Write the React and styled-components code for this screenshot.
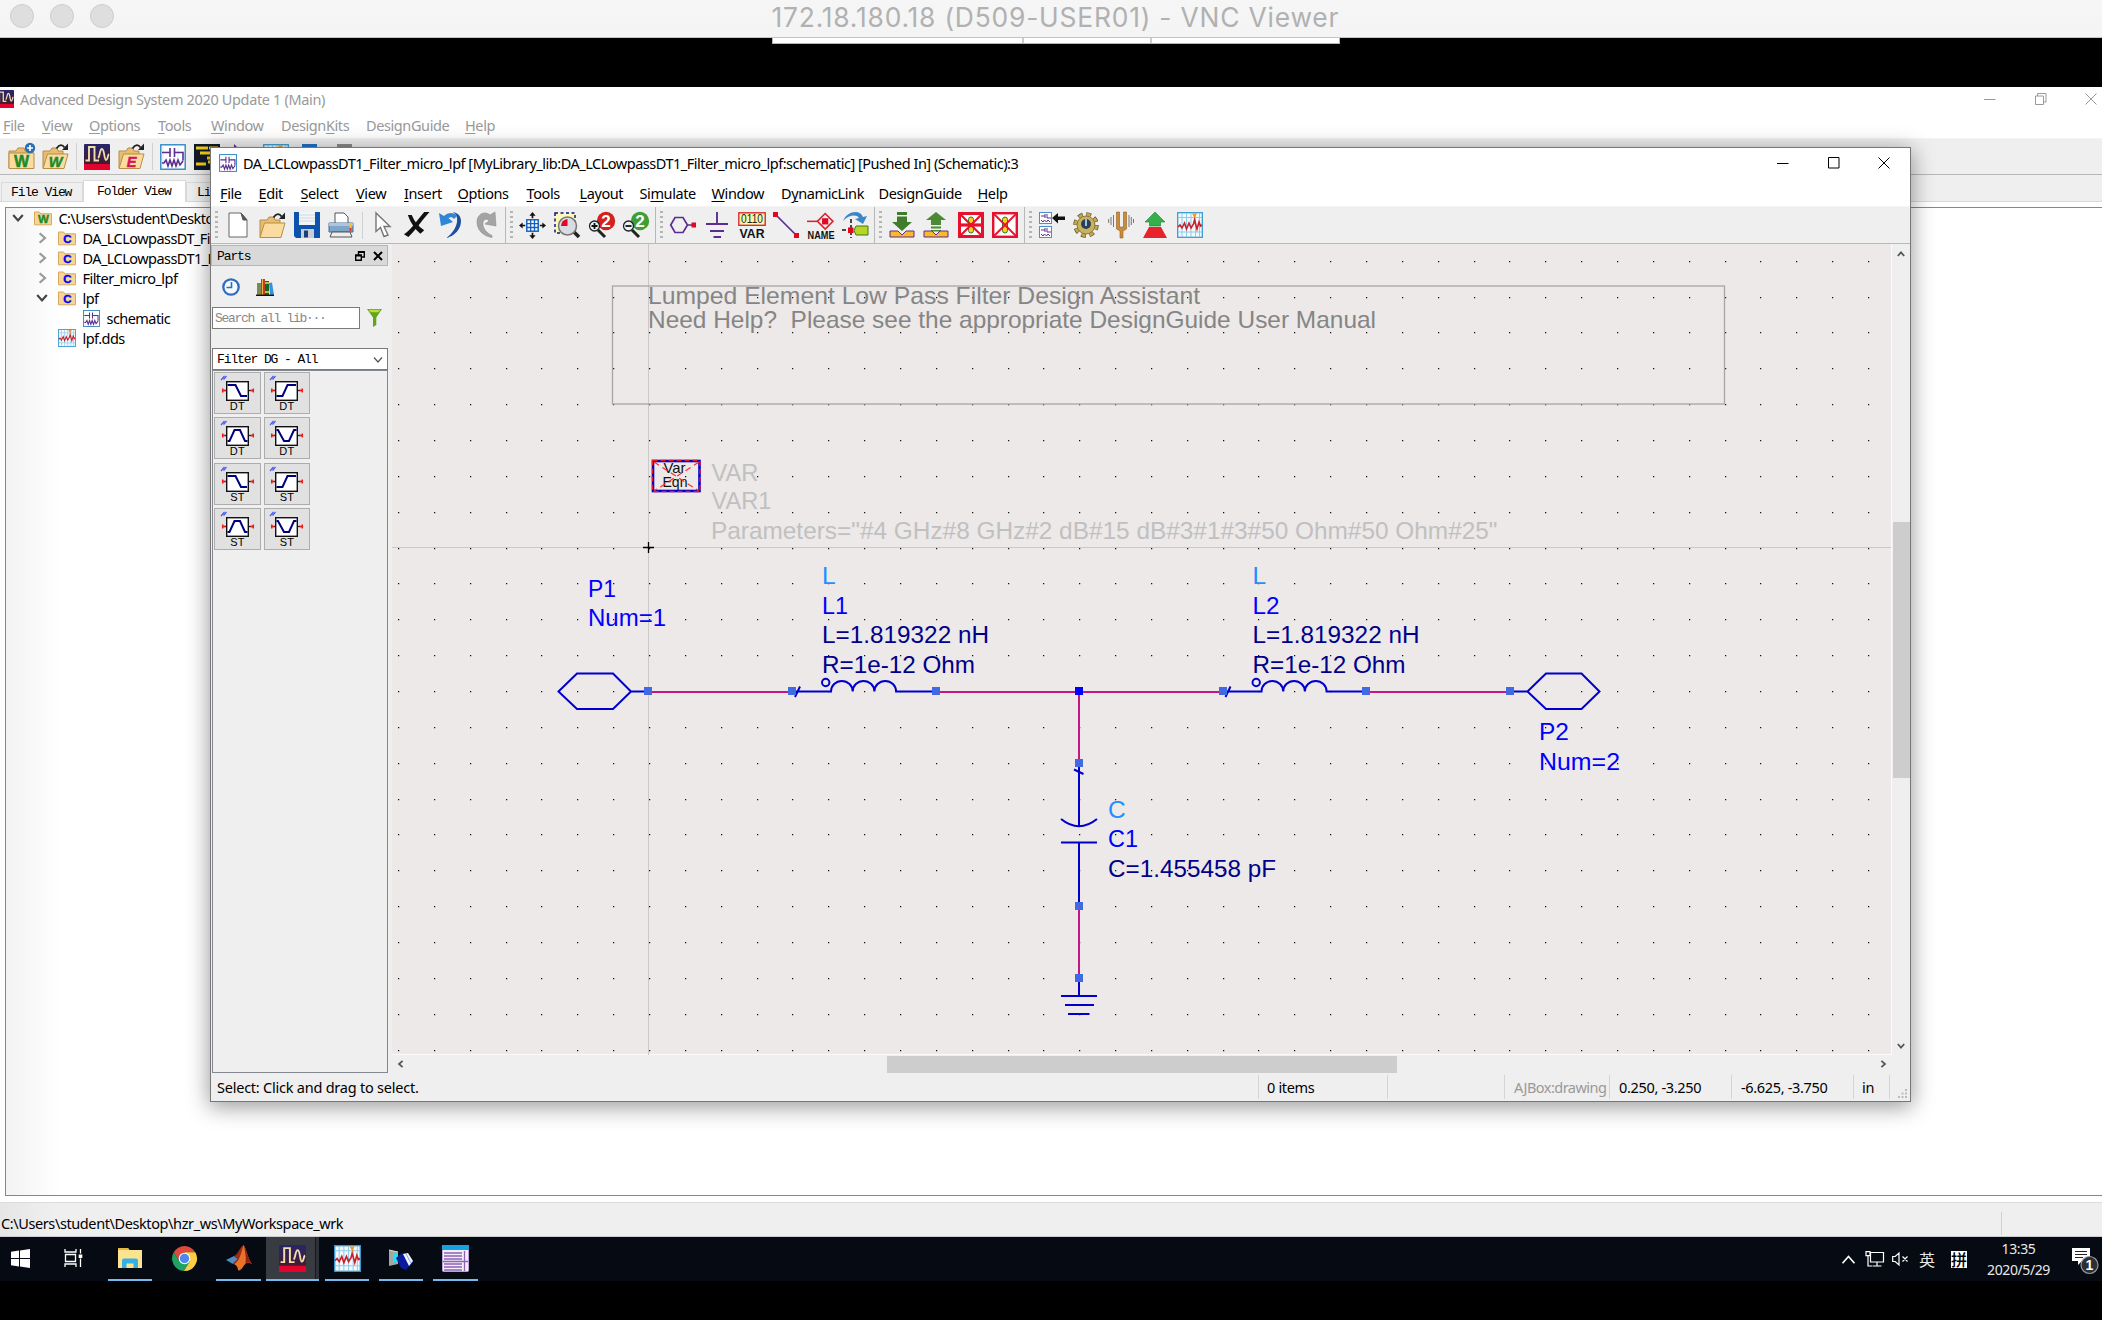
import React from 'react';
import styled, { createGlobalStyle, css } from 'styled-components';

const UI = '"Noto Sans", "Open Sans", "Noto Sans CJK SC", sans-serif';
const MONO = '"Liberation Mono", "DejaVu Sans Mono", "Noto Sans CJK SC", monospace';
const DRAW = '"Liberation Sans", Arial, sans-serif';

const Global = createGlobalStyle`
  * { box-sizing: border-box; }
  body { margin: 0; background: #000; }
  svg { display: block; flex: none; overflow: visible; }
`;

/* ---------- shell ---------- */
const Screen = styled.div`
  width: 2102px; height: 1320px; overflow: hidden;
  display: flex; flex-direction: column;
  background: #000; font-family: ${UI}; font-size: 14.5px; color: #000;
`;
const VncBar = styled.header`
  height: 38px; flex: none; padding: 0 10px;
  display: grid; grid-template-columns: 761.5px 1fr;
  background: linear-gradient(#f6f6f6, #f4f4f4); border-bottom: 1px solid #c4c4c4;
`;
const Lights = styled.div`display: flex; gap: 16px; padding-top: 4px;`;
const Light = styled.span`
  width: 24px; height: 24px; border-radius: 50%;
  background: #dedede; border: 1px solid #cdcdcd;
`;
const VncTitle = styled.h1`
  margin: 0; font: 400 26.4px/35px Inter, sans-serif; color: #b1b1b1; white-space: nowrap; letter-spacing: 0.8px;
`;
const VncGap = styled.div`height: 49px; flex: none; padding-left: 772px;`;
const VncTab = styled.div`
  width: 568px; height: 6px; background: #fff; border: solid #b5b5b5; border-width: 0 1px 1px;
  display: grid; grid-template-columns: 251px 128px 1fr;
  span { border-right: 2px solid #ccc; }
  span:last-child { border: 0; }
`;
const Desktop = styled.main`position: relative; flex: none; height: 1194px; display: flex; flex-direction: column;`;

/* ---------- windows ---------- */
const MainWindow = styled.section`
  height: 1150px; flex: none; display: flex; flex-direction: column; background: #fff;
`;
const FloatWindow = styled.section`
  position: absolute; left: 210px; top: 60px; width: 1701px; height: 955px;
  display: flex; flex-direction: column; background: #efefef;
  border: 1px solid #777; box-shadow: 0 4px 21px 1px rgba(0, 0, 0, .4);
`;
const TitleBar = styled.div`
  height: ${p => p.$h}px; flex: none; display: flex; align-items: center; overflow: hidden;
  padding: 0 0 2px; background: #fff; color: ${p => (p.$dim ? '#999' : '#000')};
  letter-spacing: ${p => p.$ls}px; white-space: nowrap;
  > svg:first-child { margin-left: ${p => p.$pl}px; }
`;
const TitleText = styled.span`flex: 1; padding-left: 6px; line-height: 20px;`;
const Controls = styled.div`
  display: flex; gap: 38.5px; padding-right: ${p => p.$pr}px; color: ${p => (p.$dim ? '#999' : '#000')};
`;
const Menu = styled.nav`
  height: ${p => p.$h}px; flex: none; display: flex; align-items: center;
  padding: 0 0 ${p => p.$pb || 0}px ${p => p.$pl}px; background: #fff; color: ${p => (p.$dim ? '#999' : '#000')};
`;
const MenuItem = styled.span`
  width: ${p => p.$w}px; line-height: 20px; white-space: nowrap; letter-spacing: -.4px;
  u { text-decoration-thickness: 1px; text-underline-offset: 2px; }
`;
const Toolbar = styled.div`
  height: ${p => p.$h}px; flex: none; display: flex; padding-left: ${p => p.$pl || 0}px;
  background: #efefef; border-top: 1px solid #f3f3f3; border-bottom: 1px solid #b8b8b8;
`;
const Group = styled.div`
  display: flex; align-items: center; padding-right: 1.6px;
  border-right: 1px solid ${p => (p.$last ? 'transparent' : '#b8b8b8')};
`;
const Grip = styled.span`
  width: 3px; height: 28px; margin: 0 2.9px 0 4.1px;
  background: repeating-linear-gradient(#b4b4b4 0 2px, transparent 2px 5px);
`;
const Cell = styled.span`width: 34.4px; display: flex; justify-content: center;`;
const Sep = styled.span`width: 1px; height: 27px; margin: 0 3px; background: #d0d0d0;`;

/* ---------- main window body ---------- */
const Tabs = styled.div`
  height: 27px; flex: none; display: flex; align-items: flex-end; padding-left: 1px;
  background: #efefef; border-bottom: 1px solid #d9d9d9;
`;
const Tab = styled.span`
  width: ${p => p.$w}px; height: ${p => (p.$on ? 22 : 19)}px; margin-bottom: ${p => (p.$on ? -1 : 0)}px;
  border: 1px solid #d9d9d9; border-bottom: 0; background: ${p => (p.$on ? '#fff' : '#efefef')};
  font: 13px/${p => (p.$on ? 22 : 20)}px ${MONO}; letter-spacing: -1.1px; padding-left: ${p => p.$pl}px; white-space: nowrap;
`;
const TreePane = styled.div`
  flex: 1; margin: 5px 0 6px 5px; border: 1px solid #828790; border-right: 0;
  background: linear-gradient(90deg, #f3f3f3, #fff 56px);
`;
const Row = styled.div`
  height: 20px; display: flex; align-items: center; padding-left: ${p => p.$pl}px; letter-spacing: -.55px; white-space: nowrap;
`;
const Twist = styled.span`width: ${p => p.$w}px; display: flex;`;
const RowText = styled.span`padding-left: 6.5px; line-height: 20px;`;
const MainStatus = styled.footer`
  height: 35px; flex: none; display: flex; align-items: center; padding-top: 7px;
  background: linear-gradient(90deg, #e6e6e6, #efefef 56px); border-top: 1px solid #dcdcdc; border-bottom: 1px solid #ccc;
  span { width: 2001px; padding-left: 1px; line-height: 22px; letter-spacing: -.4px; }
  i { width: 1px; height: 23px; background: #d0d0d0; }
`;

/* ---------- schematic window body ---------- */
const Work = styled.div`flex: 1; min-height: 0; display: flex;`;
const Parts = styled.aside`width: 181px; flex: none; display: flex; flex-direction: column; padding: 1px 4px 0 0;`;
const PartsHead = styled.div`
  height: 21px; display: flex; align-items: center; gap: 8px; padding: 1px 4px 0 5px; margin-bottom: 12px;
  background: #d9d9d9; border: 1px solid #b5b5b5; font: 13px/16px ${MONO}; letter-spacing: -1.1px;
  b { flex: 1; font-weight: 400; padding-top: 1px; }
`;
const PartsIcons = styled.div`display: flex; gap: 16px; padding-left: 11px; height: 18px; margin-bottom: 11px;`;
const SearchRow = styled.div`display: flex; align-items: center; gap: 7px; padding-left: 1px; margin-bottom: 19px;`;
const Search = styled.div`
  width: 148px; height: 22px; background: #fff; border: 1px solid #7a7a7a; padding-left: 2px;
  font: 13px/22px ${MONO}; letter-spacing: -1.3px; color: #888; white-space: nowrap;
`;
const Combo = styled.div`
  margin-left: 1px; height: 22px; display: flex; align-items: center; justify-content: space-between;
  background: #fff; border: 1px solid #7a7a7a; padding: 1px 4px 0; font: 13px/20px ${MONO}; letter-spacing: -1.1px;
`;
const PartList = styled.div`
  flex: none; height: 703px; margin-left: 1px; border: 1px solid #828790; padding: 1px;
  display: grid; grid-template-columns: 47px 46px; grid-auto-rows: 42px; gap: 3.3px 3px; align-content: start;
`;
const PartButton = styled.span`
  background: #e1e1e1; border: 1px solid #adadad; display: flex; flex-direction: column; align-items: center;
  font: 11px/11px ${DRAW}; letter-spacing: .3px; padding-top: 2px;
`;
const Sheet = styled.div`width: 1500px; display: flex; flex-direction: column;`;
const Canvas = styled.svg`background: #ece9e8; box-shadow: inset -1px -1px #fafafa; font-family: ${DRAW};`;
const HScroll = styled.div`
  height: 18px; display: flex; align-items: center; justify-content: space-between; padding: 0 5px;
`;
const VScroll = styled.div`
  width: 18px; height: 811px; display: flex; flex-direction: column; align-items: center;
  justify-content: space-between; padding: 6px 0 5px;
`;
const Thumb = styled.span`
  background: #cdcdcd;
  ${p => p.$v ? css`width: 17px; height: 256px;` : css`height: 17px; width: 510px;`}
`;
const Status = styled.footer`
  height: 28px; flex: none; display: flex; align-items: center; white-space: nowrap; padding-bottom: 1px;
`;
const StatusCell = styled.span`
  width: ${p => p.$w}px; height: 24px; line-height: 25px; padding-left: ${p => p.$pl}px;
  border-right: 1px solid #d4d4d4; color: ${p => (p.$dim ? '#999' : '#000')}; letter-spacing: ${p => p.$ls || -.33}px;
`;
const Corner = styled.span`flex: 1; align-self: flex-end; display: flex; justify-content: flex-end; padding: 0 2px 1px 0;`;

/* ---------- taskbar ---------- */
const Taskbar = styled.footer`
  height: 44px; flex: none; display: flex; background: #060b13; color: #e8e8e8;
`;
const Task = styled.span`
  width: ${p => p.$w}px; margin-left: ${p => p.$ml || 0}px; display: flex; align-items: center; justify-content: center;
  border-bottom: 2px solid ${p => (p.$run ? '#76b9ed' : 'transparent')};
  background: ${p => (p.$on ? 'linear-gradient(90deg, #383b41 49px, #15191f 49px 50px, #2e3238 50px)' : 'none')};
  background-clip: padding-box;
`;
const Tray = styled.div`margin-left: auto; display: flex; align-items: center; font-size: 14px;`;
const Slot = styled.span`width: ${p => p.$w}px; display: flex; align-items: center;`;
const Ime = styled.span`
  font: 16px/17px "Noto Sans CJK SC", sans-serif; width: 16px; height: 17px;
  ${p => p.$inv && css`background: #fff; color: #000; font-weight: 500;`}
`;
const Clock = styled.div`
  width: 85px; text-align: center; font: 14px/21px ${UI}; letter-spacing: -.4px; padding-right: 18px; white-space: nowrap;
`;

/* ---------- glyphs ---------- */
const Svg = ({ s = 26, w, h, vb, children }) => (
  <svg width={w || s} height={h || s} viewBox={vb || '0 0 26 26'} fill="none">{children}</svg>
);
const txt = { fontFamily: 'Liberation Sans, Arial, sans-serif', fontWeight: 700 };

const MinG = () => <Svg w={12} h={12} vb="0 0 12 12"><path d="M0 6.500h11.500" stroke="currentColor" /></Svg>;
const MaxG = () => <Svg w={12} h={12} vb="0 0 12 12"><path d="M.5.5h10.500v10.500H.5z" stroke="currentColor" /></Svg>;
const RestoreG = () => <Svg w={12} h={12} vb="0 0 12 12"><path d="M.5 3h8v8.500h-8zM2.500 3V.5H11V9H8.500" stroke="currentColor" /></Svg>;
const CloseG = () => <Svg w={12} h={12} vb="0 0 12 12"><path d="M.5.5l11 11M11.500.5l-11 11" stroke="currentColor" /></Svg>;
const Chev = ({ d, c = '#555', w = 8, sw = 2.2 }) => (
  <Svg w={w} h={w} vb="0 0 10 10">
    <path stroke={c} strokeWidth={sw} d={{ up: 'M1 7.500l4-4.500 4 4.500', down: 'M1 2.500L5 7l4-4.500', left: 'M7 1L2.500 5 7 9', right: 'M3 1l4.500 4L3 9' }[d]} />
  </Svg>
);

const AdsIcon = ({ s = 26 }) => (
  <Svg s={s}>
    <defs><linearGradient id="ads" x1="0" y1="0" x2="0" y2="1"><stop stopColor="#27266b" /><stop offset="1" stopColor="#4a1a1c" /></linearGradient></defs>
    <rect width="26" height="26" rx="1" fill="url(#ads)" /><path d="M0 20h26v6H0z" fill="#e4032c" />
    <path d="M1.500 16.500H5V3h5.500v13.500h4.500" stroke="#f3dcae" strokeWidth="1.900" />
    <path d="M14 14c2-1 1.500-9 4-9s2 11 4 11 1.500-5 3-6" stroke="#f3dcae" strokeWidth="1.800" />
  </Svg>
);
const SchIcon = ({ s = 26 }) => (
  <Svg s={s}>
    <rect x=".8" y=".8" width="24.400" height="24.400" fill="#fff" stroke="#2f86c6" strokeWidth="1.400" />
    <path d="M3 1v24M1 8h24M1 17h24M18 1v24" stroke="#c5dff0" strokeWidth=".6" />
    <path d="M2 8.500h8M10 4v9M14.500 4v9M14.500 8.500H23v8M2 19h2l2-3 2 6 2-6 2 6 2-6 2 6 2-6 2 5 3-4" stroke="#5c2d91" strokeWidth="1.600" />
  </Svg>
);
const DdsIcon = ({ s = 26 }) => (
  <Svg s={s}>
    <rect x=".7" y=".7" width="24.600" height="24.600" fill="#f3fafd" stroke="#3a9bd0" strokeWidth="1.300" />
    <path d="M5 1v24M9.500 1v24M14 1v24M18.500 1v24M22.500 1v24M1 5.500h24M1 20h24" stroke="#8ecbe8" strokeWidth="1" />
    <path d="M15 1.500h5l-2.500 4.500z" fill="#f39b1f" />
    <path d="M1 15l2-2 2 3 2.500-5 2 6 2.500-6 2 5 2.500-4 1-4 2.500 9 2-7 1.500 4 1.500-1" stroke="#c8202b" strokeWidth="1.600" />
  </Svg>
);
const Folder = ({ t, c, open, plus, it }) => (
  <Svg s={27} vb="0 0 27 27">
    <path d={open ? 'M1 25V8h7l2-3h5l1 3h5v6' : 'M1 25V8h7l2-3h6l1 3h8v17z'} fill="#e7bc73" stroke="#b98d45" />
    <path d={open ? 'M1 25.500L5.500 11H26l-4 14.500z' : 'M1 10h25v15.500H1z'} fill="#fbdca0" stroke="#b98d45" />
    {open && <path d="M14.500 5.500c3-4.500 6-4 8-1" stroke="#222" strokeWidth="1.800" />}
    {open && <path d="M26 .5v6.500h-6z" fill="#222" />}
    {plus && <g><circle cx="22" cy="5" r="5.200" fill="#2a6fb5" /><path d="M22 2v6M19 5h6" stroke="#fff" strokeWidth="1.700" /></g>}
    {t && <text x="13.500" y="23.500" textAnchor="middle" fontSize={it ? 14.500 : 16} fill={c} fontStyle={it ? 'italic' : undefined} stroke={c} strokeWidth=".5" {...txt}>{t}</text>}
  </Svg>
);
const SmallFolder = ({ t, c }) => (
  <Svg w={18} h={15} vb="0 0 18 15">
    <path d="M.5 13.800V1h5l1.200 1.800h10.800v11z" fill="#f7d596" stroke="#d9a95a" />
    <text x="9.200" y="12" textAnchor="middle" fontSize="11.500" fill={c} stroke={c} strokeWidth=".4" {...txt}>{t}</text>
  </Svg>
);
const LayoutIcon = () => (
  <Svg><path d="M0 0h26v26H0z" fill="#111a2c" /><path d="M2 4h12M15 4h9M6 9h13v5h-6M2 20h10M14 18h10" stroke="#f2d117" strokeWidth="3" /></Svg>
);
const icons = {
  newDoc: <Svg><path d="M4 1h12l6 7v17H4z" fill="#fff" stroke="#666" /><path d="M16 1l6 7h-4z" fill="#555" stroke="#555" /></Svg>,
  open: <Folder open />,
  save: (
    <Svg><path d="M0 0h26v26H2l-2-2z" fill="#0d52ad" /><path d="M5 0h16v13H5z" fill="#f2f5f8" /><path d="M5 3h16M5 6h16M5 9h16" stroke="#d2d8de" /><path d="M7 17h13v9H7z" fill="#c9ced6" /><path d="M10 18.500h4v7h-4z" fill="#1d3f78" /></Svg>
  ),
  print: (
    <Svg><path d="M7 12V1h9l4 4v7z" fill="#fff" stroke="#555" /><path d="M1 11h24v9H1z" fill="#7fa5c9" stroke="#496a8b" /><path d="M1 11h24v3H1z" fill="#adc6dd" /><path d="M4 20h18l2 5H2z" fill="#eee" stroke="#555" /><path d="M22.500 12v7" stroke="#f4c22d" strokeWidth="2" /><path d="M22.500 16v3" stroke="#d33" strokeWidth="2" /></Svg>
  ),
  pointer: <Svg><path d="M6 1v18.500l4.500-4 3.500 9 4-1.500-4-8.500h6z" fill="#fff" stroke="#777" strokeWidth="1.400" /></Svg>,
  del: <Svg s={26} vb="0 0 27 27"><path d="M0 23C8 18 14 8 21 0h5.500C20 7 12 19 4.500 26z" fill="#111" /><path d="M4 3h4c3 7 7 12 13 16l-4 3.500C12 18 7 12 4 3z" fill="#111" /></Svg>,
  undo: <Svg><path d="M7 26c9-2 15-9 15-17 0-5-3-8-8-9 4 3 4.500 6 4 10-1 6-5 12-11 16z" fill="#1c4fa0" /><path d="M0 1l2 13 12-4-4.500-4c2-1.500 4-1 5.500 1l3-3c-3-4-9-4-13 0z" fill="#2f86d6" /></Svg>,
  redo: <Svg><path d="M19 25.500C10 24 4 18 4 10c0-5 3-9 8-9 2 0 4 1 5 2l5-3 1 14-11-2 4-3c-2-3-5-2-6 1-1 5 3 11 9 13.500z" fill="#a4a4a4" stroke="#8d8d8d" strokeWidth=".6" /></Svg>,
  move: (
    <Svg s={27}><rect x="7.500" y="7.500" width="11" height="11" fill="#fff" stroke="#1560bd" strokeWidth="1.400" /><path d="M11.200 7v12M14.900 7v12M7 11.200h12M7 14.900h12" stroke="#1560bd" strokeWidth="1.300" /><path d="M13 0l3 3.500h-2.200V6h-1.600V3.500H10zM13 26l3-3.500h-2.200V20h-1.600v2.500H10zM0 13l3.500-3v2.200H6v1.600H3.500V16zM26 13l-3.500-3v2.200H20v1.600h2.500V16z" fill="#111" /></Svg>
  ),
  zoomArea: (
    <Svg><path d="M1 1h20v20H1z" fill="#fdfbb8" stroke="#12127d" strokeWidth="1.500" strokeDasharray="3 2.500" /><path d="M20 20l5 5" stroke="#222" strokeWidth="3.500" /><circle cx="13.500" cy="14" r="9" fill="#d8dbe2" stroke="#777" strokeWidth="1.500" /><path d="M13.500 14H7a7 7 0 016.500-7z" fill="#e40521" /></Svg>
  ),
  zoomIn: (
    <Svg><circle cx="17" cy="9" r="9.200" fill="#d3211d" /><text x="17" y="15" fontSize="17" textAnchor="middle" fill="#fff" {...txt}>2</text><path d="M9 18l7 7" stroke="#222" strokeWidth="3" /><circle cx="5.500" cy="14" r="5" fill="#e9f3f8" stroke="#222" strokeWidth="1.300" /><path d="M5.500 11v6M2.500 14h6" stroke="#111" strokeWidth="1.800" /></Svg>
  ),
  zoomOut: (
    <Svg><circle cx="17" cy="9" r="9.200" fill="#3f9f35" /><text x="17" y="15" fontSize="17" textAnchor="middle" fill="#fff" {...txt}>2</text><path d="M9 18l7 7" stroke="#222" strokeWidth="3" /><circle cx="5.500" cy="14" r="5" fill="#e9f3f8" stroke="#222" strokeWidth="1.300" /><path d="M2.500 14h6" stroke="#111" strokeWidth="1.800" /></Svg>
  ),
  pin: <Svg><path d="M5 5.500h8l4.500 7.500-4.500 7.500H5L.7 13zM17.500 13H22" stroke="#5c2d91" strokeWidth="1.700" /><path d="M21.500 10.500H26v5h-4.500z" fill="#e40521" /></Svg>,
  ground: <Svg><path d="M13 0v12M2 12h22M6 19h14M9.500 25h7.500" stroke="#5c2d91" strokeWidth="1.900" /></Svg>,
  varEq: (
    <Svg s={27}><rect x=".8" y=".8" width="25.400" height="12" fill="#fdf6a9" stroke="#d8232a" strokeWidth="1.300" /><text x="13.500" y="11" fontSize="11.500" textAnchor="middle" fill="#222" fontFamily={DRAW} textLength="21" lengthAdjust="spacingAndGlyphs">0110</text><text x="13.500" y="25.500" fontSize="12" textAnchor="middle" fill="#111" textLength="24" lengthAdjust="spacingAndGlyphs" {...txt}>VAR</text></Svg>
  ),
  wire: <Svg><path d="M3 3l20 20" stroke="#5c2d91" strokeWidth="1.700" /><path d="M0 0h5v5H0zM21 21h5v5h-5z" fill="#e40521" /></Svg>,
  name: (
    <Svg s={27}><path d="M0 9h10" stroke="#d8232a" strokeWidth="1.500" /><path d="M17.500 1.500L25 9l-7.500 7.500L10 9z" stroke="#d8232a" strokeWidth="1.500" /><path d="M14.500 6h6v6h-6z" fill="#e40521" /><text x="13.500" y="26" fontSize="10.500" textAnchor="middle" fill="#111" textLength="26" lengthAdjust="spacingAndGlyphs" {...txt}>NAME</text></Svg>
  ),
  rotate: (
    <Svg><path d="M1 9C5-1 18-3 21 5l4-1-4 8-8-5 4-1C14 2 7 3 1 9z" fill="#3b86c8" /><path d="M9 7v19M0 18h9" stroke="#111" strokeWidth="1.500" strokeDasharray="4 2" /><path d="M6 15.500h5.500v5.500H6z" fill="#e40521" /><path d="M14 14h12v9H14l-2-4.500z" fill="#b9d523" stroke="#3c7a1e" /></Svg>
  ),
  push: (
    <Svg><path d="M8 0h10v3H8zM8 4.500h10V10h5l-10 9-10-9h5z" fill="#3f7d2c" /><path d="M1 19h8l4 4 4-4h8v6H1z" fill="#fbb829" stroke="#5c2d91" /></Svg>
  ),
  pop: (
    <Svg><path d="M13 0l10 8h-5v5H8V8H3zM8 14.500h10v2H8zM8 18h10v1.500H8z" fill="#4c8a36" /><path d="M1 19h8l4 4 4-4h8v6H1z" fill="#fbb829" stroke="#5c2d91" /></Svg>
  ),
  off: (
    <Svg><rect x="1.500" y="1.500" width="23" height="23" fill="#fff" stroke="#e8112d" strokeWidth="3" /><rect x="10.500" y="5" width="5" height="16" rx="2.500" fill="#f5d21c" stroke="#2f7a28" /><path d="M2 2l22 22M24 2L2 24" stroke="#e8112d" strokeWidth="2.200" /><path d="M2 13h22" stroke="#e8112d" strokeWidth="3.200" /></Svg>
  ),
  short: (
    <Svg><rect x="1.200" y="1.200" width="23.600" height="23.600" fill="#fff" stroke="#e8112d" strokeWidth="2.400" /><rect x="10.500" y="5" width="5" height="16" rx="2.500" fill="#f5d21c" stroke="#2f7a28" /><path d="M2 2l22 22M24 2L2 24" stroke="#e8112d" strokeWidth="1.800" /></Svg>
  ),
  swap: (
    <Svg><rect x=".5" y=".5" width="12" height="11" fill="#fff" stroke="#4b8fd0" /><rect x=".5" y="14.500" width="12" height="11" fill="#fff" stroke="#4b8fd0" /><path d="M2 4h4M6 2v4M8 2v4h4M2 8l2 2 1.500-2 2 2 1.500-2 2 2M2 18h4M6 16v4M8 16v4h4M2 22l2 2 1.500-2 2 2 1.500-2 2 2" stroke="#5c2d91" /><path d="M13 6l6-5v3.500h7v3.500h-7v3.500z" fill="#111" /></Svg>
  ),
  gear: (
    <Svg><circle cx="13" cy="13" r="10" stroke="#5f5223" strokeWidth="5.500" strokeDasharray="4.500 3.350" /><circle cx="13" cy="13" r="10" stroke="#c2aa55" strokeWidth="4" strokeDasharray="3.500 4.350" strokeDashoffset="-.5" /><circle cx="13" cy="13" r="9" fill="#c9b25f" stroke="#8a7636" /><circle cx="13" cy="12" r="5" fill="#2c3d57" /><path d="M13 7v7" stroke="#9fc0e4" strokeWidth="2" /></Svg>
  ),
  tune: (
    <Svg><path d="M8.500 0h3v15h4V0h3v17l-3.500 2v7h-3v-7l-3.500-2z" fill="#c98b3c" stroke="#94611f" strokeWidth=".6" /><path d="M5.500 3v12M3 5v8M.7 7v4M21 3v12M23.300 5v8M25.500 7v4" stroke="#777" strokeWidth="1" /></Svg>
  ),
  tree: <Svg><path d="M13 0l10 10h-4.500v4h-11v-4H3z" fill="#35b04a" stroke="#1f7d34" strokeWidth=".6" /><path d="M7 15h12l6 11H1z" fill="#e8232a" /></Svg>,
  graph: <DdsIcon />,
};

const Clk = () => <Svg s={18} vb="0 0 18 18"><circle cx="9" cy="9" r="7.700" stroke="#2f6cc0" strokeWidth="2.300" fill="#f5f9ff" /><path d="M9.500 4v5.500H4.500" stroke="#2f6cc0" strokeWidth="1.600" /></Svg>;
const Books = () => (
  <Svg s={18} vb="0 0 18 18"><path d="M1 5h4v12H1z" fill="#7c8b52" /><path d="M5 1h4v16H5z" fill="#c9372c" /><path d="M6.500 1v16" stroke="#f2b04a" /><path d="M9 3h4v14H9z" fill="#13692b" /><path d="M9 5h4M9 14h4" stroke="#e7e23b" strokeWidth="1.500" /><path d="M13 5l3-.5L18 17h-4z" fill="#3d8fdd" /><path d="M0 17.300h18" stroke="#111" strokeWidth="1.400" /></Svg>
);
const Funnel = () => <Svg w={15} h={18} vb="0 0 15 18"><path d="M0 0h15L9.300 8.500V16L6 18V8.500z" fill="#62a41d" /><path d="M1.500 .8h12l-2 2.400h-8z" fill="#b9dd3f" /></Svg>;
const FloatG = () => <Svg s={10} vb="0 0 10 10"><path d="M.7 4h5.600v5.300H.7zM.7 4.700h5.600M3.500 3.500V.7h5.800v5.300H7M3.500 1.300h5.800" stroke="#000" strokeWidth="1.400" /></Svg>;
const ParX = () => <Svg s={10} vb="0 0 10 10"><path d="M1 1l8 8M9 1L1 9" stroke="#000" strokeWidth="2" /></Svg>;

const shapes = {
  lp: 'M7.500 9h8l5.500 11h6', hp: 'M7.500 20h6l5-11h8.500',
  bp: 'M7.500 20h2l5-11h5.500l5 11h2.500', bs: 'M7.500 9h1.500l6 11h5l5-11h2.500',
};
const Part = ({ k, label }) => (
  <PartButton>
    <Svg w={36} h={26} vb="0 0 36 26">
      <path d="M1 5l3.500-4M3.500 4.500l3-3.500" stroke="#4a5cf0" strokeWidth="1.200" />
      <path d="M3 15.500h30" stroke="#222" strokeWidth="1.300" />
      <path d="M2 15.500h3.500M30.500 15.500H34M2.700 13.500v4M33.300 13.500v4" stroke="#f01818" strokeWidth="1.500" />
      <rect x="6.700" y="6.700" width="21.600" height="18.600" fill="#fff" stroke="#111" strokeWidth="1.400" />
      <path d={shapes[k]} transform="translate(0 1)" stroke="#00007f" strokeWidth="2" />
    </Svg>
    {label}
  </PartButton>
);

/* ---------- schematic ---------- */
const dots = (() => {
  let d = '';
  for (let j = 0; j < 23; j++) for (let i = 0; i < 42; i++) d += `M${Math.round(398 + 35.854 * i)} ${Math.round(260.700 + 35.860 * j)}h1.250v1.200h-1.250z`;
  return d;
})();
const T = ({ x, y, w, c, s = 24.500, children }) => (
  <text x={x + 1} y={y} fontSize={s} fill={c} textLength={w} lengthAdjust="spacingAndGlyphs" xmlSpace="preserve">{children}</text>
);
const Node = ({ x, y, c = '#4169e1' }) => <rect x={x - 4} y={y - 4} width="8" height="8" fill={c} />;
const Inductor = ({ x }) => (
  <g stroke="#0000cd" strokeWidth="2" transform={`translate(${x} 0)`}>
    <path d="M0 691.500h39a10.800 10.500 0 0121.700 0a10.800 10.500 0 0121.700 0a10.800 10.500 0 0121.700 0H143.500M3 697l5-10.500" />
    <circle cx="33.700" cy="682.500" r="3.700" />
  </g>
);
const BLUE = '#0000ff', NAVY = '#00008b', SKY = '#1e90ff', DIM = '#c0c0c0';
const Schematic = () => (
  <Canvas width="1500" height="811" viewBox="392 244 1500 811" fill="none">
    <path d="M648.500 244v811M392 547.500h1499" stroke="#cbc9c8" />
    <path d={dots} fill="#111" />
    <rect x="612.500" y="286" width="1112" height="118" stroke="#a8a6a5" strokeWidth="1.300" />
    <T x={647} y={304} w={552} s={24} c="#858585">Lumped Element Low Pass Filter Design Assistant</T>
    <T x={647} y={328} w={728} s={24} c="#858585">{'Need Help?\u00a0 Please see the appropriate DesignGuide User Manual'}</T>
    <T x={662.500} y={473} w={22} s={14.500} c="#111">Var</T>
    <T x={661.500} y={487} w={25} s={14.500} c="#111">Eqn</T>
    <rect x="653" y="461" width="46.500" height="30" stroke="#0000cd" strokeWidth="2.600" />
    <rect x="652.500" y="460.500" width="47.500" height="31" stroke="#e8142c" strokeWidth="1.400" strokeDasharray="5 3" />
    <path d="M654 462l45 29M699 462l-45 29" stroke="#ff2a2a" strokeDasharray="6 4" strokeWidth="1.200" />
    <T x={710.500} y={480.700} w={47} c={DIM}>VAR</T>
    <T x={710.500} y={509} w={60} c={DIM}>VAR1</T>
    <T x={710} y={538.700} w={786.500} c={DIM}>Parameters="#4 GHz#8 GHz#2 dB#15 dB#3#1#3#50 Ohm#50 Ohm#25"</T>
    <path d="M643 547.500h11M648.500 542v11" stroke="#000" strokeWidth="1.300" />
    <T x={587} y={596.500} w={28} c={BLUE}>P1</T>
    <T x={587} y={626.300} w={78} c={BLUE}>Num=1</T>
    <T x={821} y={584} c={SKY}>L</T>
    <T x={821} y={614} w={26} c={BLUE}>L1</T>
    <T x={821} y={643} w={167} c={NAVY}>L=1.819322 nH</T>
    <T x={821} y={673} w={153} c={NAVY}>R=1e-12 Ohm</T>
    <T x={1251.500} y={584} c={SKY}>L</T>
    <T x={1251.500} y={614} w={27} c={BLUE}>L2</T>
    <T x={1251.500} y={643} w={167} c={NAVY}>L=1.819322 nH</T>
    <T x={1251.500} y={673} w={153} c={NAVY}>R=1e-12 Ohm</T>
    <T x={1107} y={817.500} c={SKY}>C</T>
    <T x={1107} y={847.300} w={30} c={BLUE}>C1</T>
    <T x={1107} y={877.300} w={168} c={NAVY}>C=1.455458 pF</T>
    <T x={1538} y={740.300} w={30} c={BLUE}>P2</T>
    <T x={1538} y={770.300} w={81} c={BLUE}>Num=2</T>
    <path d="M648 692h144M935.500 692h287M1366 692h144M1079 691v72M1079 906v72" stroke="#c71585" strokeWidth="2" />
    <path d="M558.500 691.500L577 673.500h36l18 18-18 17.500h-36zM631 691.500h17M1510 691.500h17.500L1546 673.500h35.500l18 18-18 17.500H1546l-18.500-17.500" stroke="#0000cd" strokeWidth="2" />
    <Inductor x={792} />
    <Inductor x={1222.500} />
    <path d="M1079 763v63M1074 769.500l9.500 4.500M1061 819q18 14.500 36 0M1061 842.500h36M1079 842.500v64M1079 978v18M1061 996h36M1065 1005h29M1068 1014h21.500" stroke="#0000cd" strokeWidth="2" />
    {[648, 792, 936, 1223, 1366, 1510].map(x => <Node key={x} x={x} y={691} />)}
    <Node x={1079} y={691} c="#0000ff" />
    {[763, 906, 978].map(y => <Node key={y} x={1079} y={y} />)}
  </Canvas>
);

/* ---------- data ---------- */
const mainMenu = [['&File', 39], ['&View', 47], ['&Options', 69], ['&Tools', 53], ['&Window', 70], ['Design&Kits', 85], ['DesignGuide', 99], ['&Help', 40]];
const schMenu = [['&File', 38.5], ['&Edit', 42], ['&Select', 55.5], ['&View', 48], ['&Insert', 53.5], ['&Options', 69], ['&Tools', 53], ['&Layout', 60], ['Si&mulate', 72], ['&Window', 69.5], ['D&ynamicLink', 97.5], ['DesignGuide', 99], ['&Help', 40]];
const Label = ({ t }) => {
  const i = t.indexOf('&');
  return i < 0 ? t : <>{t.slice(0, i)}<u>{t[i + 1]}</u>{t.slice(i + 2)}</>;
};
const MenuBar = ({ items, ...p }) => (
  <Menu {...p}>{items.map(([t, w]) => <MenuItem key={t} $w={w}><Label t={t} /></MenuItem>)}</Menu>
);
const Tools = ({ names }) => names.map(n => <Cell key={n}>{icons[n]}</Cell>);
const groups = [
  ['move', 'zoomArea', 'zoomIn', 'zoomOut'],
  ['pin', 'ground', 'varEq', 'wire', 'name', 'rotate'],
  ['push', 'pop', 'off', 'short'],
  ['swap', 'gear', 'tune', 'tree', 'graph'],
];
const parts = [['lp', 'DT'], ['hp', 'DT'], ['bp', 'DT'], ['bs', 'DT'], ['lp', 'ST'], ['hp', 'ST'], ['bp', 'ST'], ['bs', 'ST']];
const C = <SmallFolder t="C" c="#0000ff" />;
const treeRows = [
  [6, 'down', <SmallFolder t="W" c="#1c8a2b" />, 'C:\\Users\\student\\Desktop'],
  [30, 'right', C, 'DA_LCLowpassDT_Filter'],
  [30, 'right', C, 'DA_LCLowpassDT1_Filter'],
  [30, 'right', C, 'Filter_micro_lpf'],
  [30, 'down', C, 'lpf'],
  [55, null, <SchIcon s={17} />, 'schematic'],
  [30, null, <DdsIcon s={18} />, 'lpf.dds'],
];

export default function App() {
  return (
    <Screen>
      <Global />
      <VncBar>
        <Lights><Light /><Light /><Light /></Lights>
        <VncTitle>172.18.180.18 (D509-USER01) - VNC Viewer</VncTitle>
      </VncBar>
      <VncGap><VncTab><span /><span /><span /></VncTab></VncGap>
      <Desktop>
        <MainWindow>
          <TitleBar $h={26} $pl={-4} $dim $ls={-.35}>
            <AdsIcon s={18} />
            <TitleText>Advanced Design System 2020 Update 1 (Main)</TitleText>
            <Controls $pr={5} $dim><MinG /><RestoreG /><CloseG /></Controls>
          </TitleBar>
          <MenuBar items={mainMenu} $h={25} $pl={3} $pb={2} $dim />
          <Toolbar $h={37} $pl={4}>
            <Group $last>
              <Cell><Folder t="W" c="#1c8a2b" plus /></Cell><Cell><Folder t="W" c="#1c8a2b" open it /></Cell><Sep />
              <Cell><AdsIcon /></Cell><Cell><Folder t="E" c="#d4145a" open it /></Cell><Sep />
              <Cell><SchIcon /></Cell><Cell><LayoutIcon /></Cell>
              <Cell><Svg><path d="M5 0l9 9H5z" fill="#5c2d91" /></Svg></Cell>
              <Cell><DdsIcon /></Cell>
              <Cell><Svg><path d="M5 0h15v8H5z" fill="#1f72c4" /></Svg></Cell>
              <Cell><Svg><path d="M5 0h15v8H5z" fill="#8a8a8a" /></Svg></Cell>
            </Group>
          </Toolbar>
          <Tabs>
            <Tab $w={82} $pl={9}>File View</Tab>
            <Tab $w={103} $pl={13} $on>Folder View</Tab>
            <Tab $w={60} $pl={10}>Lib</Tab>
          </Tabs>
          <TreePane>
            {treeRows.map(([pl, tw, icon, t]) => (
              <Row key={t} $pl={pl}>
                <Twist $w={22}>{tw && <Chev d={tw} w={12} sw={1.800} c={tw === 'down' ? '#444' : '#999'} />}</Twist>
                {icon}<RowText>{t}</RowText>
              </Row>
            ))}
          </TreePane>
          <MainStatus><span>C:\Users\student\Desktop\hzr_ws\MyWorkspace_wrk</span><i /></MainStatus>
        </MainWindow>

        <FloatWindow>
          <TitleBar $h={32} $pl={8} $ls={-.482}>
            <SchIcon s={18} />
            <TitleText>DA_LCLowpassDT1_Filter_micro_lpf [MyLibrary_lib:DA_LCLowpassDT1_Filter_micro_lpf:schematic] [Pushed In] (Schematic):3</TitleText>
            <Controls $pr={20}><MinG /><MaxG /><CloseG /></Controls>
          </TitleBar>
          <MenuBar items={schMenu} $h={26} $pl={9} />
          <Toolbar $h={38}>
            <Group>
              <Grip /><Tools names={['newDoc', 'open', 'save', 'print']} /><Sep /><Tools names={['pointer', 'del', 'undo', 'redo']} />
            </Group>
            {groups.map((g, i) => <Group key={i} $last={i === 3}><Grip /><Tools names={g} /></Group>)}
          </Toolbar>
          <Work>
            <Parts>
              <PartsHead><b>Parts</b><FloatG /><ParX /></PartsHead>
              <PartsIcons><Clk /><Books /></PartsIcons>
              <SearchRow><Search>Search all lib···</Search><Funnel /></SearchRow>
              <Combo>Filter DG - All<Chev d="down" w={10} sw={1.200} /></Combo>
              <PartList>{parts.map(([k, l]) => <Part key={k + l} k={k} label={l} />)}</PartList>
            </Parts>
            <Sheet>
              <Schematic />
              <HScroll><Chev d="left" /><Thumb /><Chev d="right" /></HScroll>
            </Sheet>
            <VScroll><Chev d="up" /><Thumb $v /><Chev d="down" /></VScroll>
          </Work>
          <Status>
            <StatusCell $w={1048} $pl={6} $ls={-.23}>Select: Click and drag to select.</StatusCell>
            <StatusCell $w={129} $pl={8}>0 items</StatusCell>
            <StatusCell $w={117} />
            <StatusCell $w={105} $pl={9} $dim $ls={-.52}>AJBox:drawing</StatusCell>
            <StatusCell $w={122} $pl={9}>0.250, -3.250</StatusCell>
            <StatusCell $w={122} $pl={9}>-6.625, -3.750</StatusCell>
            <StatusCell $w={36} $pl={8}>in</StatusCell>
            <Corner><Svg s={10} vb="0 0 10 10"><path d="M7 0h2v2H7zM7 3.500h2v2H7zM7 7h2v2H7zM3.500 3.500h2v2h-2zM3.500 7h2v2h-2zM0 7h2v2H0z" fill="#bbb" /></Svg></Corner>
          </Status>
        </FloatWindow>

        <Taskbar>
          <Task $w={41}><Svg s={19} vb="0 0 19 19"><path d="M0 2.700l8-1.100V9H0zM9 1.400L19 0v9H9zM0 10h8v7.400l-8-1.100zM9 10h10v9L9 17.600z" fill="#fff" /></Svg></Task>
          <Task $w={44} $ml={10}><Svg w={19} h={18} vb="0 0 19 18"><path d="M1 0v3h11V0M1.500 5.500h10v7h-10zM1 18v-3h11v3M16.500 0v4.500M16.500 9.500V18" stroke="#fff" strokeWidth="1.300" /><path d="M14.700 5.500h3.600v3.500h-3.600z" fill="#fff" /></Svg></Task>
          <Task $w={44} $ml={13} $run><Svg w={24} h={20} vb="0 0 24 20"><path d="M0 0h10l1.500 2H24v18H0z" fill="#fce38f" /><path d="M0 0h10l1 2H0z" fill="#e9b93d" /><path d="M4 20v-7.500q0-2 2-2h12q2 0 2 2V20h-4.500v-4.500h-7V20z" fill="#35b0e6" /></Svg></Task>
          <Task $w={44} $ml={10}>
            <Svg s={25} vb="-12.500 -12.500 25 25">
              <path d="M-10.800-6.200A12.500 12.500 0 0110.800-6.200L0-5.800-5.200 3z" fill="#de4b3e" />
              <path d="M-10.800-6.250A12.500 12.500 0 00-.5 12.500L5.500 3-5 3z" fill="#1da362" />
              <path d="M10.800-6.250A12.500 12.500 0 01-.5 12.500L5.200 3 0-6.200z" fill="#fdce44" />
              <circle r="5.800" fill="#fff" /><circle r="4.700" fill="#4b88ef" />
            </Svg>
          </Task>
          <Task $w={45} $ml={10} $run>
            <Svg s={26}><path d="M0 15l8-4 4 3-5 5z" fill="#4a8fc4" /><path d="M8 11c4-1 6-10 10-11-2 9-4 17-9 19l-2-1 5-4z" fill="#9a2c18" /><path d="M17.500 0c3 4 4 13 8.500 19-4-2-6-2-9 3-2 3-4 4-5 3 0-3-2-5-4-6 5-2 7-10 9.500-19z" fill="#e9722b" /><path d="M18 1c3 4 4 13 8 18-4-2-5-2-7 1 2-6 0-13-1-19z" fill="#8d2115" /></Svg>
          </Task>
          <Task $w={53} $ml={5} $run $on><AdsIcon s={27} /></Task>
          <Task $w={44} $ml={6} $run><DdsIcon s={27} /></Task>
          <Task $w={44} $ml={10} $run>
            <Svg><path d="M1 5l9 2v12l-9 2z" fill="#a5a5a5" /><path d="M1 5l9 2" stroke="#ddd" /><path d="M5 7.500l5 1v8l-5 1.500z" fill="#19e5f2" /><path d="M8 13l5-4 5-1 7 9-7 8-5-2z" fill="#0b1a9a" /><path d="M15 9l5-1 5 8-4 5z" fill="#f0f4fc" /><path d="M18 9l5 9" stroke="#8fa3cf" /></Svg>
          </Task>
          <Task $w={45} $ml={10} $run>
            <Svg s={27} vb="0 0 27 27"><rect x=".5" y=".5" width="26" height="26" rx="1" fill="#f3edf8" stroke="#b8a4cf" /><path d="M0 0h27v5H0z" fill="#16a2e0" /><path d="M2 8h18M2 11h18M2 14h18M2 19h18M2 22h18M2 25h18M22.500 6v20M1 16.500h25" stroke="#8d63b5" strokeWidth="1.300" /></Svg>
          </Task>
          <Tray>
            <Slot $w={24}><Chev d="up" w={15} sw={1.100} c="#fff" /></Slot>
            <Slot $w={27}><Svg w={19} h={16} vb="0 0 19 16"><path d="M5.500 1.500h13v9.500h-13zM12 11v4M7.500 15h9M1 .7h4v4H1zM3 5v10h4" stroke="#fff" strokeWidth="1.200" /></Svg></Slot>
            <Slot $w={27}><Svg w={17} h={14} vb="0 0 17 14"><path d="M.7 4.500h2.500L7 1v12L3.200 9.500H.7zM10.500 4.500l5 5M15.500 4.500l-5 5" stroke="#fff" strokeWidth="1.200" /></Svg></Slot>
            <Slot $w={32}><Ime>英</Ime></Slot>
            <Slot $w={34}><Ime $inv>拼</Ime></Slot>
            <Clock>13:35<br />2020/5/29</Clock>
            <Slot $w={32}>
              <Svg w={29} h={26} vb="0 0 29 26"><path d="M2 2h18v13h-8l-4 4v-4H2z" fill="#fff" /><path d="M5 5.500h12M5 8.500h12M5 11.500h8" stroke="#222" strokeWidth="1.200" /><circle cx="19.500" cy="19" r="8.500" fill="#2b2e33" stroke="#9a9a9a" strokeWidth="1.200" /><text x="19.500" y="24" textAnchor="middle" fontSize="14" fill="#fff" {...txt}>1</text></Svg>
            </Slot>
          </Tray>
        </Taskbar>
      </Desktop>
    </Screen>
  );
}
